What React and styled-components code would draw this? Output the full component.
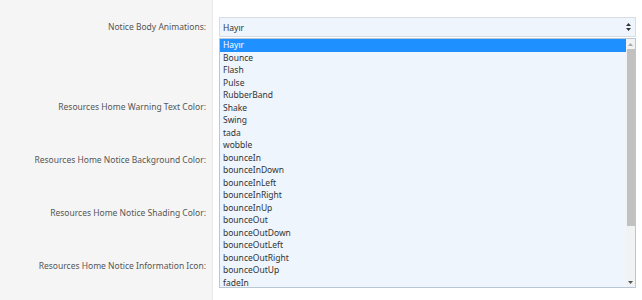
import React from 'react'
import styled, { createGlobalStyle } from 'styled-components'

const GlobalStyle = createGlobalStyle`
    html, body {
        margin: 0;
        padding: 0;
        background: #ffffff;
    }
    body {
        font-family: "Noto Sans", "Open Sans", sans-serif;
        font-size: 8.5px;
        color: #333;
    }
`

const Form = styled.div`
    width: 642px;
    height: 300px;
    overflow: hidden;
    display: flex;
    flex-direction: column;
`

const Row = styled.div`
    display: flex;
    height: ${(p) => p.$height}px;
    flex: ${(p) => (p.$grow ? 1 : 'none')};
`

const LabelCell = styled.div`
    width: 206px;
    flex: none;
    background: #f5f5f5;
    border-right: 1px solid #e8e8e8;
    padding: ${(p) => p.$top}px 6px 0 0;
    text-align: right;
    color: #555;
    line-height: 20px;
    white-space: nowrap;
`

const FieldCell = styled.div`
    flex: 1;
    padding: ${(p) => p.$top}px 6px 0 6px;
    position: relative;
`

const SelectBox = styled.div`
    height: 20px;
    box-sizing: border-box;
    border: 1px solid #d8dde3;
    background: #eef5fd;
    display: flex;
    align-items: center;
    justify-content: space-between;
    padding: 0 4px 0 3px;
    color: #333;
`

const Arrows = styled.svg`
    width: 5px;
    height: 8px;
`

const Listbox = styled.div`
    position: absolute;
    left: 6px;
    right: 6px;
    top: 38px;
    height: 250px;
    box-sizing: border-box;
    border: 1px solid #b9c6d6;
    background: #eef5fd;
    display: flex;
    z-index: 2;
`

const Options = styled.div`
    flex: 1;
    display: flex;
    flex-direction: column;
`

const Option = styled.div`
    height: 12.5px;
    line-height: 12.5px;
    padding-left: 3px;
    flex: none;
    color: ${(p) => (p.$selected ? '#ffffff' : '#333')};
    background: ${(p) => (p.$selected ? '#1e90ff' : 'transparent')};
`

const Scrollbar = styled.div`
    width: 9px;
    flex: none;
    background: #f0f2f4;
    display: flex;
    flex-direction: column;
    align-items: center;
`

const ScrollArrow = styled.div`
    height: 10px;
    display: flex;
    align-items: center;
    justify-content: center;
    flex: none;
`

const Thumb = styled.div`
    width: 8px;
    height: 177px;
    background: #c1c1c1;
    flex: none;
`

const Spacer = styled.div`
    flex: 1;
`

const options = [
    'Hayır', 'Bounce', 'Flash', 'Pulse', 'RubberBand', 'Shake', 'Swing', 'tada',
    'wobble', 'bounceIn', 'bounceInDown', 'bounceInLeft', 'bounceInRight',
    'bounceInUp', 'bounceOut', 'bounceOutDown', 'bounceOutLeft', 'bounceOutRight',
    'bounceOutUp', 'fadeIn',
]

const rows = [
    { label: 'Resources Home Warning Text Color:', height: 53 },
    { label: 'Resources Home Notice Background Color:', height: 53 },
    { label: 'Resources Home Notice Shading Color:', height: 53 },
    { label: 'Resources Home Notice Information Icon:', height: 53, grow: true },
]

const App = () => {
    return (
        <>
            <GlobalStyle />
            <Form>
                <Row $height={80}>
                    <LabelCell $top={17}>Notice Body Animations:</LabelCell>
                    <FieldCell $top={17}>
                        <SelectBox>
                            Hayır
                            <Arrows viewBox="0 0 5 8">
                                <path d="M2.5 0 L5 3 L0 3 Z M2.5 8 L5 5 L0 5 Z" fill="#333" />
                            </Arrows>
                        </SelectBox>
                        <Listbox>
                            <Options>
                                {options.map((o, i) => (
                                    <Option key={o} $selected={i === 0}>{o}</Option>
                                ))}
                            </Options>
                            <Scrollbar>
                                <ScrollArrow>
                                    <svg width="5" height="3" viewBox="0 0 5 3">
                                        <path d="M2.5 0 L5 3 L0 3 Z" fill="#a8a8a8" />
                                    </svg>
                                </ScrollArrow>
                                <Thumb />
                                <Spacer />
                                <ScrollArrow>
                                    <svg width="5" height="3" viewBox="0 0 5 3">
                                        <path d="M0 0 L5 0 L2.5 3 Z" fill="#555" />
                                    </svg>
                                </ScrollArrow>
                            </Scrollbar>
                        </Listbox>
                    </FieldCell>
                </Row>
                {rows.map((r) => (
                    <Row key={r.label} $height={r.height} $grow={r.grow}>
                        <LabelCell $top={17}>{r.label}</LabelCell>
                        <FieldCell $top={17} />
                    </Row>
                ))}
            </Form>
        </>
    )
}

export default App
